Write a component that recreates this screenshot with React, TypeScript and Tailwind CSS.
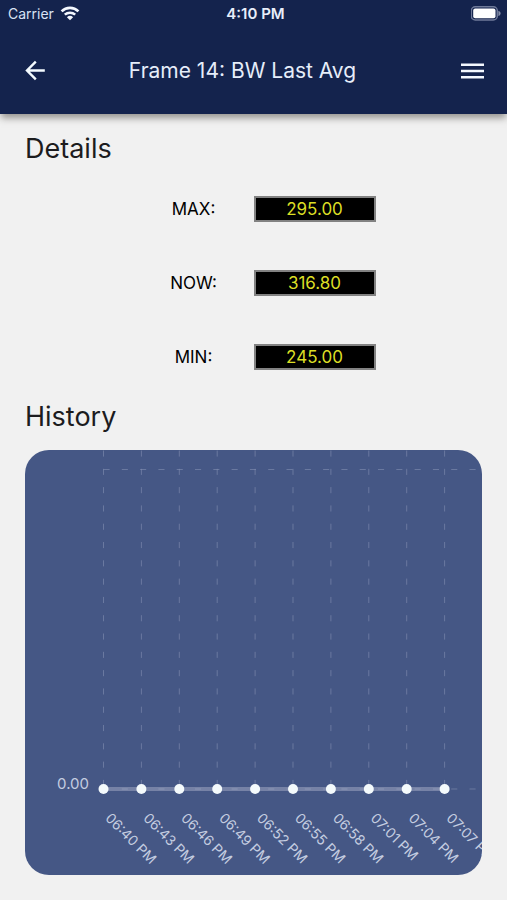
const readings = [
  { label: "MAX:", value: "295.00" },
  { label: "NOW:", value: "316.80" },
  { label: "MIN:", value: "245.00" },
]

const history = [
  { time: "06:40 PM", value: 0 },
  { time: "06:43 PM", value: 0 },
  { time: "06:46 PM", value: 0 },
  { time: "06:49 PM", value: 0 },
  { time: "06:52 PM", value: 0 },
  { time: "06:55 PM", value: 0 },
  { time: "06:58 PM", value: 0 },
  { time: "07:01 PM", value: 0 },
  { time: "07:04 PM", value: 0 },
  { time: "07:07 PM", value: 0 },
]

// Chart geometry, in viewBox units
const LEFT = 78.5
const TOP = 19.5
const BASE = 339
const STEP = 37.9
const DASH = "6.1 12.2"

function StatusBar() {
  return (
    <div className="grid h-7 grid-cols-3 items-center pl-2 pr-1 text-sm text-[#d9e2f4]">
      <div className="flex items-center gap-1.5">
        <span>Carrier</span>
        <svg width="20" height="16" viewBox="0 0 20 16" fill="none" stroke="#f4f8ff">
          <path d="M1.6 5.400a12 12 0 0 1 16.800 0" strokeWidth="2.7" />
          <path d="M4.8 8.700a7.600 7.600 0 0 1 10.400 0" strokeWidth="2.5" />
          <path d="M10 14.200 6.900 11.200a4.500 4.500 0 0 1 6.200 0Z" fill="#f4f8ff" stroke="none" />
        </svg>
      </div>
      <span className="text-center text-[15px] font-semibold text-[#e8eefa]">4:10 PM</span>
      <svg className="justify-self-end" width="32" height="16" viewBox="0 0 32 16">
        <rect x="0.3" y="0.800" width="26" height="13.2" rx="4" fill="none" stroke="#6f7a99" strokeWidth="1.5" />
        <rect x="2.2" y="2.600" width="22.300" height="9.600" rx="2" fill="#fff" />
        <path d="M27.4 4.800v5.200c1.200-.5 2.200-1.500 2.200-2.600s-1-2.100-2.200-2.600Z" fill="#8790aa" />
      </svg>
    </div>
  )
}

function NavBar() {
  return (
    <div className="flex h-[86px] items-center px-[22px] pb-px">
      <button type="button" aria-label="Back">
        <svg width="27" height="27" viewBox="0 0 27 27" fill="none" stroke="#f4fbff" strokeWidth="2.4">
          <path d="M22.800 13.500H5.500M13.800 4.700 5 13.500l8.800 8.800" />
        </svg>
      </button>
      <h1 className="flex-1 pr-6 text-center text-[21px] leading-7 text-[#e6edfa]">Frame 14: BW Last Avg</h1>
      <button type="button" aria-label="Menu">
        <svg width="25" height="18" viewBox="0 0 25 18" fill="#f4f8ff">
          <path d="M1 1.500h23v2.600H1zM1 7.700h23v2.600H1zM1 13.900h23v2.600H1z" />
        </svg>
      </button>
    </div>
  )
}

function HistoryChart() {
  const points = history.map((h, i) => ({ ...h, x: LEFT + i * STEP }))
  const last = points[points.length - 1]

  return (
    <div className="mt-[15px] overflow-hidden rounded-3xl bg-[#455785]">
      <svg className="block w-full" viewBox="0 0 457 425">
        {/* Grid */}
        <g stroke="#8390b3" strokeOpacity="0.6" strokeDasharray={DASH}>
          {points.map((p) => (
            <line key={p.time} x1={p.x} x2={p.x} y1={0.5} y2={BASE} />
          ))}
          <line x1={LEFT} x2="457" y1={TOP} y2={TOP} />
          <line x1={LEFT} x2="457" y1={BASE} y2={BASE} />
        </g>

        {/* Series */}
        <line x1={LEFT} x2={last.x} y1={BASE} y2={BASE} stroke="#7682a6" strokeWidth="4" />
        <line x1={LEFT} x2={last.x} y1={BASE} y2={BASE} stroke="#8b96b5" strokeDasharray={DASH} />
        {points.map((p) => (
          <circle key={p.time} cx={p.x} cy={BASE} r="5" fill="#f4fafc" />
        ))}

        {/* Labels */}
        <g fill="#c4cde0">
          <text x="64" y={BASE} textAnchor="end" fontSize="15">
            0.00
          </text>
          {points.map((p) => (
            <text key={p.time} transform={`translate(${p.x + 1} 369) rotate(45)`} fontSize="14">
              {p.time}
            </text>
          ))}
        </g>
      </svg>
    </div>
  )
}

export default function App() {
  return (
    <div className="min-h-screen bg-[#f1f1f1] pb-6 font-['Inter',sans-serif] text-[#1c1c1e]">
      <header className="bg-[#14234d] shadow-[0_5px_7px_-1px_rgba(60,55,50,0.5)]">
        <StatusBar />
        <NavBar />
      </header>

      <main className="px-[25px] pt-[17px]">
        <h2 className="text-[27px] leading-9">Details</h2>
        <dl className="my-[29px] flex flex-col items-center gap-12">
          {readings.map((r) => (
            <div key={r.label} className="flex h-[26px] items-center gap-7 pl-[30px]">
              <dt className="w-16 text-center text-[17px] leading-6 text-black">{r.label}</dt>
              <dd className="w-[122px] border-2 border-[#828282] bg-black text-center text-[17px] leading-[22px] text-[#dcdf25]">
                {r.value}
              </dd>
            </div>
          ))}
        </dl>

        <h2 className="text-[27px] leading-9">History</h2>
        <HistoryChart />
      </main>
    </div>
  )
}
